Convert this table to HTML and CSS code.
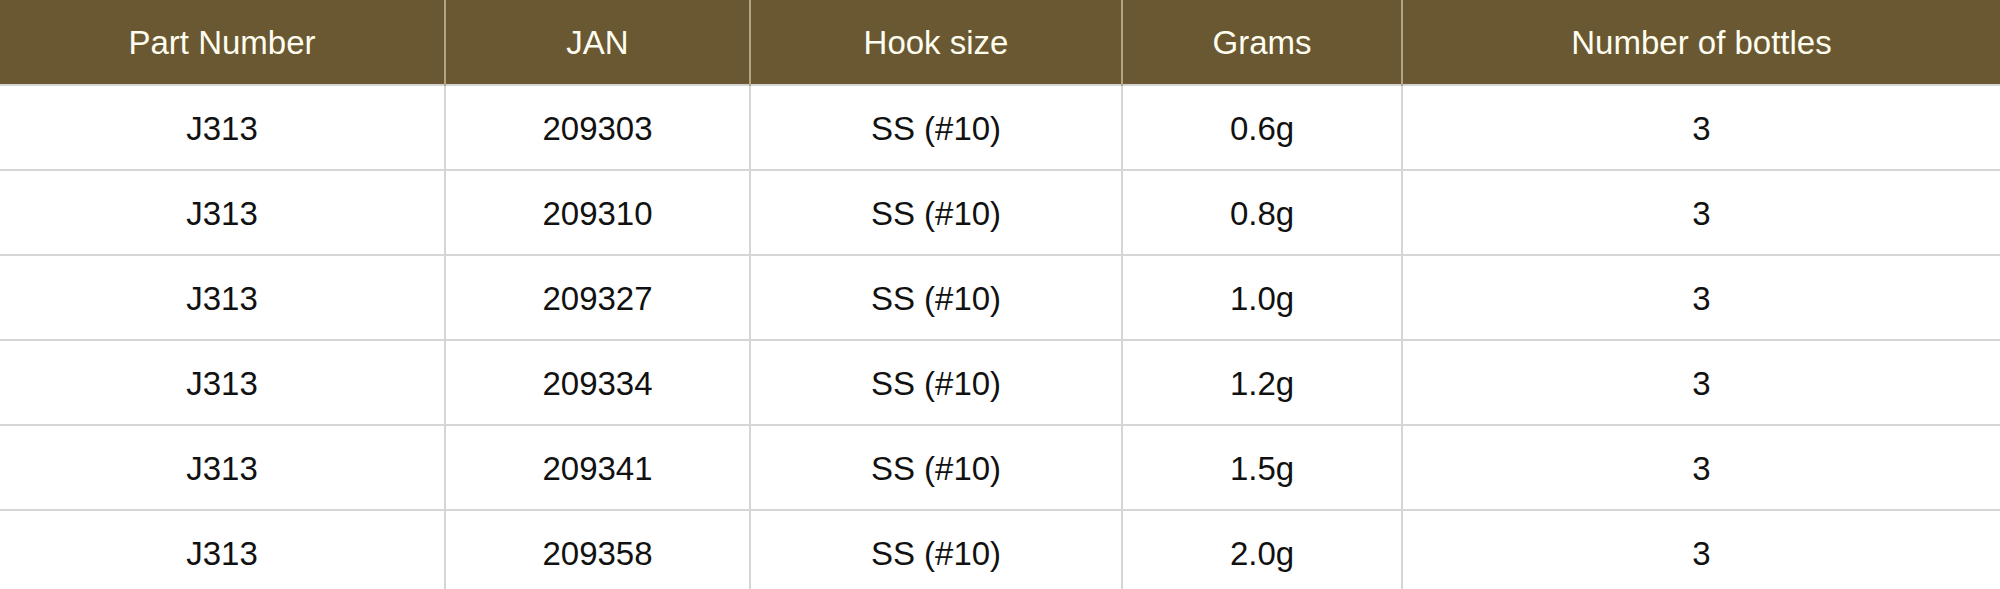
FILE: index.html
```html
<!DOCTYPE html>
<html lang="en">
<head>
<meta charset="utf-8">
<title>Specifications</title>
<link rel="stylesheet" href="styles.css">
</head>
<body>
<table class="spec">
  <colgroup>
    <col class="c1"><col class="c2"><col class="c3"><col class="c4"><col class="c5">
  </colgroup>
  <thead>
    <tr><th>Part Number</th><th>JAN</th><th>Hook size</th><th>Grams</th><th>Number of bottles</th></tr>
  </thead>
  <tbody>
    <tr><td>J313</td><td>209303</td><td>SS (#10)</td><td>0.6g</td><td>3</td></tr>
    <tr><td>J313</td><td>209310</td><td>SS (#10)</td><td>0.8g</td><td>3</td></tr>
    <tr><td>J313</td><td>209327</td><td>SS (#10)</td><td>1.0g</td><td>3</td></tr>
    <tr><td>J313</td><td>209334</td><td>SS (#10)</td><td>1.2g</td><td>3</td></tr>
    <tr><td>J313</td><td>209341</td><td>SS (#10)</td><td>1.5g</td><td>3</td></tr>
    <tr><td>J313</td><td>209358</td><td>SS (#10)</td><td>2.0g</td><td>3</td></tr>
  </tbody>
</table>
</body>
</html>
```

FILE: styles.css
```css
html, body {
  margin: 0;
  padding: 0;
  background: #ffffff;
}
body {
  font-family: "Liberation Sans", Arial, sans-serif;
  overflow: hidden;
}
.spec {
  width: 2000px;
  border-collapse: collapse;
  table-layout: fixed;
  font-size: 33px;
}
.c1 { width: 445px; }
.c2 { width: 305px; }
.c3 { width: 372px; }
.c4 { width: 280px; }
.c5 { width: 598px; }
.spec th {
  height: 82px;
  padding: 2px 0 0;
  background: #695831;
  color: #fffdf0;
  font-weight: normal;
  text-align: center;
  vertical-align: middle;
  border-left: 2px solid #b3a582;
  border-right: 2px solid #b3a582;
}
.spec th:first-child { border-left: none; }
.spec th:last-child { border-right: none; }
.spec td {
  height: 81px;
  padding: 2px 0 0;
  color: #111111;
  text-align: center;
  vertical-align: middle;
  border: 2px solid #d5d5d5;
}
.spec td:first-child { border-left: none; }
.spec td:last-child { border-right: none; }
```
